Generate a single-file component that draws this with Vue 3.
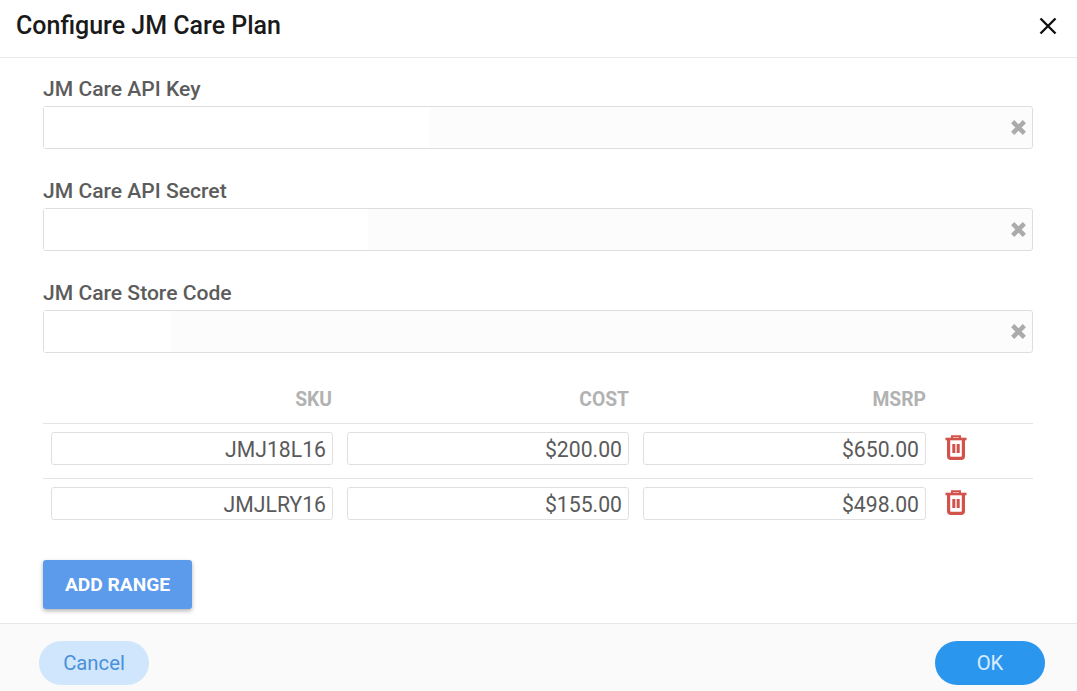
<template>
  <div class="modal">
    <header class="modal-header">
      <h1 class="modal-title">Configure JM Care Plan</h1>
      <svg class="close-icon" viewBox="0 0 20 20" width="20" height="20">
        <path d="M2.5 2.5 L17.5 17.5 M17.5 2.5 L2.5 17.5" stroke="#111" stroke-width="2.4" fill="none" />
      </svg>
    </header>

    <main class="modal-body">
      <div v-for="field in fields" :key="field.label" class="field">
        <label class="field-label">{{ field.label }}</label>
        <div class="field-input">
          <span class="field-mask" :style="{ width: field.mask + 'px' }" />
          <svg class="clear-icon" viewBox="0 0 16 16" width="17" height="17">
            <path d="M2.5 2.5 L13.5 13.5 M13.5 2.5 L2.5 13.5" stroke="#ababab" stroke-width="4.2" fill="none" />
          </svg>
        </div>
      </div>

      <div class="range-table">
        <div class="range-head">
          <span>SKU</span>
          <span>COST</span>
          <span>MSRP</span>
        </div>
        <div v-for="row in rows" :key="row.sku" class="range-row">
          <div class="cell">{{ row.sku }}</div>
          <div class="cell">{{ row.cost }}</div>
          <div class="cell">{{ row.msrp }}</div>
          <svg class="trash-icon" viewBox="0 0 22 25" width="22" height="25">
            <path d="M0.5 4 H21.5" stroke="#d2524c" stroke-width="2.6" fill="none" />
            <path d="M7 3.5 V1.2 H15 V3.5" stroke="#d2524c" stroke-width="2" fill="none" />
            <path d="M3.6 4 V21 Q3.6 23.4 6 23.4 H16 Q18.4 23.4 18.4 21 V4" stroke="#d2524c" stroke-width="3.2" fill="none" />
            <path d="M8.8 9 V18 M13.2 9 V18" stroke="#d2524c" stroke-width="3" fill="none" />
          </svg>
        </div>
      </div>

      <button class="add-btn">ADD RANGE</button>
    </main>

    <footer class="modal-footer">
      <button class="pill pill-cancel">Cancel</button>
      <button class="pill pill-ok">OK</button>
    </footer>
  </div>
</template>

<script setup>
const fields = [
  { label: "JM Care API Key", mask: 386 },
  { label: "JM Care API Secret", mask: 324 },
  { label: "JM Care Store Code", mask: 126 },
];

const rows = [
  { sku: "JMJ18L16", cost: "$200.00", msrp: "$650.00" },
  { sku: "JMJLRY16", cost: "$155.00", msrp: "$498.00" },
];
</script>

<style>
html,
body {
  margin: 0;
  background: #fff;
}
</style>

<style scoped>
.modal {
  display: flex;
  flex-direction: column;
  width: 1077px;
  height: 691px;
  overflow: hidden;
  font-family: Roboto, "Liberation Sans", sans-serif;
  background: #fff;
}

.modal-header {
  display: flex;
  align-items: center;
  justify-content: space-between;
  box-sizing: border-box;
  height: 58px;
  padding: 0 19px 5px 16px;
  border-bottom: 1px solid #e8e8e8;
}

.modal-title {
  margin: 0;
  font-size: 25px;
  font-weight: 500;
  line-height: 28px;
  color: #1a1a1a;
}

.modal-body {
  flex: 1;
  padding: 20px 44px 0 43px;
}

.field {
  margin-bottom: 31px;
}

.field-label {
  display: block;
  height: 28px;
  font-size: 21.1px;
  font-weight: 500;
  line-height: 22px;
  color: #5c5c5c;
}

.field-input {
  position: relative;
  display: flex;
  align-items: center;
  justify-content: flex-end;
  box-sizing: border-box;
  height: 43px;
  padding-right: 5px;
  background: #fcfcfc;
  border: 1px solid #dedede;
  border-radius: 3px;
}

.field-mask {
  position: absolute;
  top: 0;
  bottom: 0;
  left: 0;
  background: #fff;
}

.clear-icon {
  position: relative;
}

.range-table {
  margin-top: -8px;
}

.range-head {
  display: grid;
  grid-template-columns: 289px 297px 297px;
  box-sizing: border-box;
  height: 47px;
  padding-top: 12px;
  font-size: 19.3px;
  font-weight: 700;
  line-height: 24px;
  color: #b2b2b2;
  text-align: right;
}

.range-row {
  display: grid;
  grid-template-columns: 282px 282px 283px 30px;
  column-gap: 14px;
  align-items: start;
  box-sizing: border-box;
  height: 55px;
  padding: 8px 0 0 8px;
  border-top: 1px solid #e4e4e4;
}

.cell {
  box-sizing: border-box;
  height: 33px;
  padding: 0 6px;
  font-size: 21.2px;
  line-height: 33px;
  color: #5a5a5a;
  text-align: right;
  background: #fff;
  border: 1px solid #e0e0e0;
  border-radius: 3px;
}

.trash-icon {
  margin-top: 3px;
  margin-left: 5px;
}

.add-btn {
  display: block;
  width: 149px;
  height: 49px;
  margin-top: 27px;
  padding: 0;
  font-family: inherit;
  font-size: 19.2px;
  font-weight: 700;
  color: #fff;
  background: #5c9bec;
  border: none;
  border-radius: 3px;
  box-shadow: 0 2px 4px rgba(0, 0, 0, 0.3);
}

.modal-footer {
  display: flex;
  align-items: center;
  justify-content: space-between;
  box-sizing: border-box;
  height: 68px;
  padding: 0 32px 0 39px;
  margin-top: auto;
  background: #fafafa;
  border-top: 1px solid #e6e6e6;
}

.pill {
  width: 110px;
  height: 44px;
  margin-top: 11px;
  padding: 0;
  font-family: inherit;
  font-size: 20.3px;
  border: none;
  border-radius: 22px;
}

.pill-cancel {
  color: #4a90d9;
  background: #cfe6fc;
}

.pill-ok {
  color: #d8ecff;
  background: #2b96ee;
}
</style>
